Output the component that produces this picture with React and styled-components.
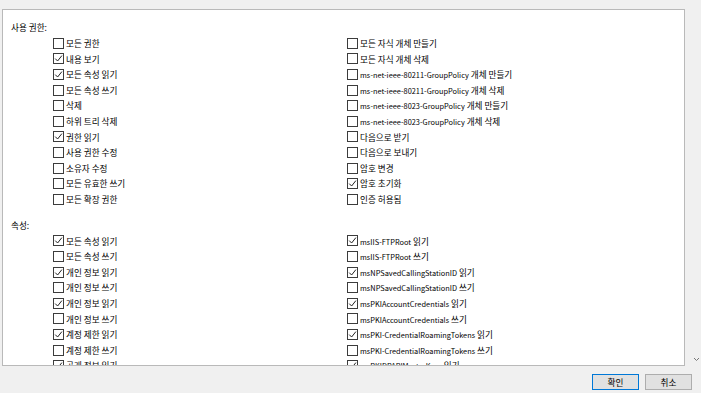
import React from "react";
import styled, { createGlobalStyle } from "styled-components";

const GlobalStyle = createGlobalStyle`
  html, body { margin: 0; padding: 0; background: #f0f0f0; overflow: hidden; }
  * { box-sizing: border-box; }
`;

const Window = styled.div`
  width: 701px;
  height: 393px;
  background: #f0f0f0;
  display: flex;
  flex-direction: column;
  font-family: "Noto Sans CJK KR", "Noto Sans", sans-serif;
  font-size: 8.6px;
  color: #000;
`;

const Body = styled.div`
  display: flex;
  padding: 9px 0 0 2px;
  height: 366px;
`;

const Panel = styled.div`
  width: 683px;
  height: 100%;
  background: #fff;
  border: 1px solid #b9b9b9;
  overflow: hidden;
  padding: 10px 0 0 0;
`;

const ScrollBar = styled.div`
  flex: 1;
  display: flex;
  flex-direction: column;
  justify-content: flex-end;
  align-items: flex-end;
  padding: 0 1px 4px 0;
`;

const Section = styled.section`
  margin-bottom: 10.4px;
`;

const Heading = styled.div`
  height: 15.6px;
  line-height: 15.6px;
  padding-left: 8px;
`;

const Grid = styled.div`
  display: grid;
  grid-template-columns: 294px 1fr;
  padding-left: 50px;
`;

const Row = styled.label`
  height: 15.6px;
  display: flex;
  align-items: center;
  gap: 2px;
  white-space: nowrap;
`;

const Label = styled.span`
  line-height: 1;
`;

const Latin = styled.span`
  font-size: 7.4px;
`;

const Box = styled.span`
  width: 11px;
  height: 11px;
  border: 1px solid #3c3c3c;
  background: #fff;
  display: inline-flex;
  align-items: center;
  justify-content: center;
  flex: none;
`;

const Footer = styled.div`
  flex: 1;
  display: flex;
  justify-content: flex-end;
  align-items: flex-start;
  gap: 6px;
  padding: 8px 9px 0 0;
`;

const Button = styled.button`
  width: 47px;
  height: 16px;
  padding: 0;
  font-family: inherit;
  font-size: 8.6px;
  color: #000;
  background: #e1e1e1;
  border: 1px solid ${(p) => (p.$primary ? "#0078d7" : "#adadad")};
`;

function Text({ children }) {
  const parts = children.split(/([A-Za-z0-9\-]+)/);
  return (
    <Label>
      {parts.map((p, i) =>
        /^[A-Za-z0-9\-]+$/.test(p) ? <Latin key={i}>{p}</Latin> : <React.Fragment key={i}>{p}</React.Fragment>
      )}
    </Label>
  );
}

function Check({ checked, label }) {
  return (
    <Row>
      <Box>
        {checked && (
          <svg width="9" height="9" viewBox="0 0 9 9">
            <path d="M1.2 4.6 L3.6 7 L7.9 1.6" fill="none" stroke="#222" strokeWidth="1" />
          </svg>
        )}
      </Box>
      <Text>{label}</Text>
    </Row>
  );
}

const perms = [
  [["모든 권한", 0], ["모든 자식 개체 만들기", 0]],
  [["내용 보기", 1], ["모든 자식 개체 삭제", 0]],
  [["모든 속성 읽기", 1], ["ms-net-ieee-80211-GroupPolicy 개체 만들기", 0]],
  [["모든 속성 쓰기", 0], ["ms-net-ieee-80211-GroupPolicy 개체 삭제", 0]],
  [["삭제", 0], ["ms-net-ieee-8023-GroupPolicy 개체 만들기", 0]],
  [["하위 트리 삭제", 0], ["ms-net-ieee-8023-GroupPolicy 개체 삭제", 0]],
  [["권한 읽기", 1], ["다음으로 받기", 0]],
  [["사용 권한 수정", 0], ["다음으로 보내기", 0]],
  [["소유자 수정", 0], ["암호 변경", 0]],
  [["모든 유효한 쓰기", 0], ["암호 초기화", 1]],
  [["모든 확장 권한", 0], ["인증 허용됨", 0]],
];

const props = [
  [["모든 속성 읽기", 1], ["msIIS-FTPRoot 읽기", 1]],
  [["모든 속성 쓰기", 0], ["msIIS-FTPRoot 쓰기", 0]],
  [["개인 정보 읽기", 1], ["msNPSavedCallingStationID 읽기", 1]],
  [["개인 정보 쓰기", 0], ["msNPSavedCallingStationID 쓰기", 0]],
  [["개인 정보 읽기", 1], ["msPKIAccountCredentials 읽기", 1]],
  [["개인 정보 쓰기", 0], ["msPKIAccountCredentials 쓰기", 0]],
  [["계정 제한 읽기", 1], ["msPKI-CredentialRoamingTokens 읽기", 1]],
  [["계정 제한 쓰기", 0], ["msPKI-CredentialRoamingTokens 쓰기", 0]],
  [["공개 정보 읽기", 1], ["msPKIDPAPIMasterKeys 읽기", 1]],
];

function Block({ title, rows }) {
  return (
    <Section>
      <Heading>{title}</Heading>
      <Grid>
        {rows.flatMap((pair, i) =>
          pair.map(([label, c], j) => <Check key={`${i}-${j}`} label={label} checked={!!c} />)
        )}
      </Grid>
    </Section>
  );
}

export default function App() {
  return (
    <>
      <GlobalStyle />
      <Window>
        <Body>
          <Panel>
            <Block title="사용 권한:" rows={perms} />
            <Block title="속성:" rows={props} />
          </Panel>
          <ScrollBar>
            <svg width="7" height="5" viewBox="0 0 7 5">
              <path d="M1 1 L3.5 3.5 L6 1" fill="none" stroke="#777" strokeWidth="1" />
            </svg>
          </ScrollBar>
        </Body>
        <Footer>
          <Button $primary>확인</Button>
          <Button>취소</Button>
        </Footer>
      </Window>
    </>
  );
}
